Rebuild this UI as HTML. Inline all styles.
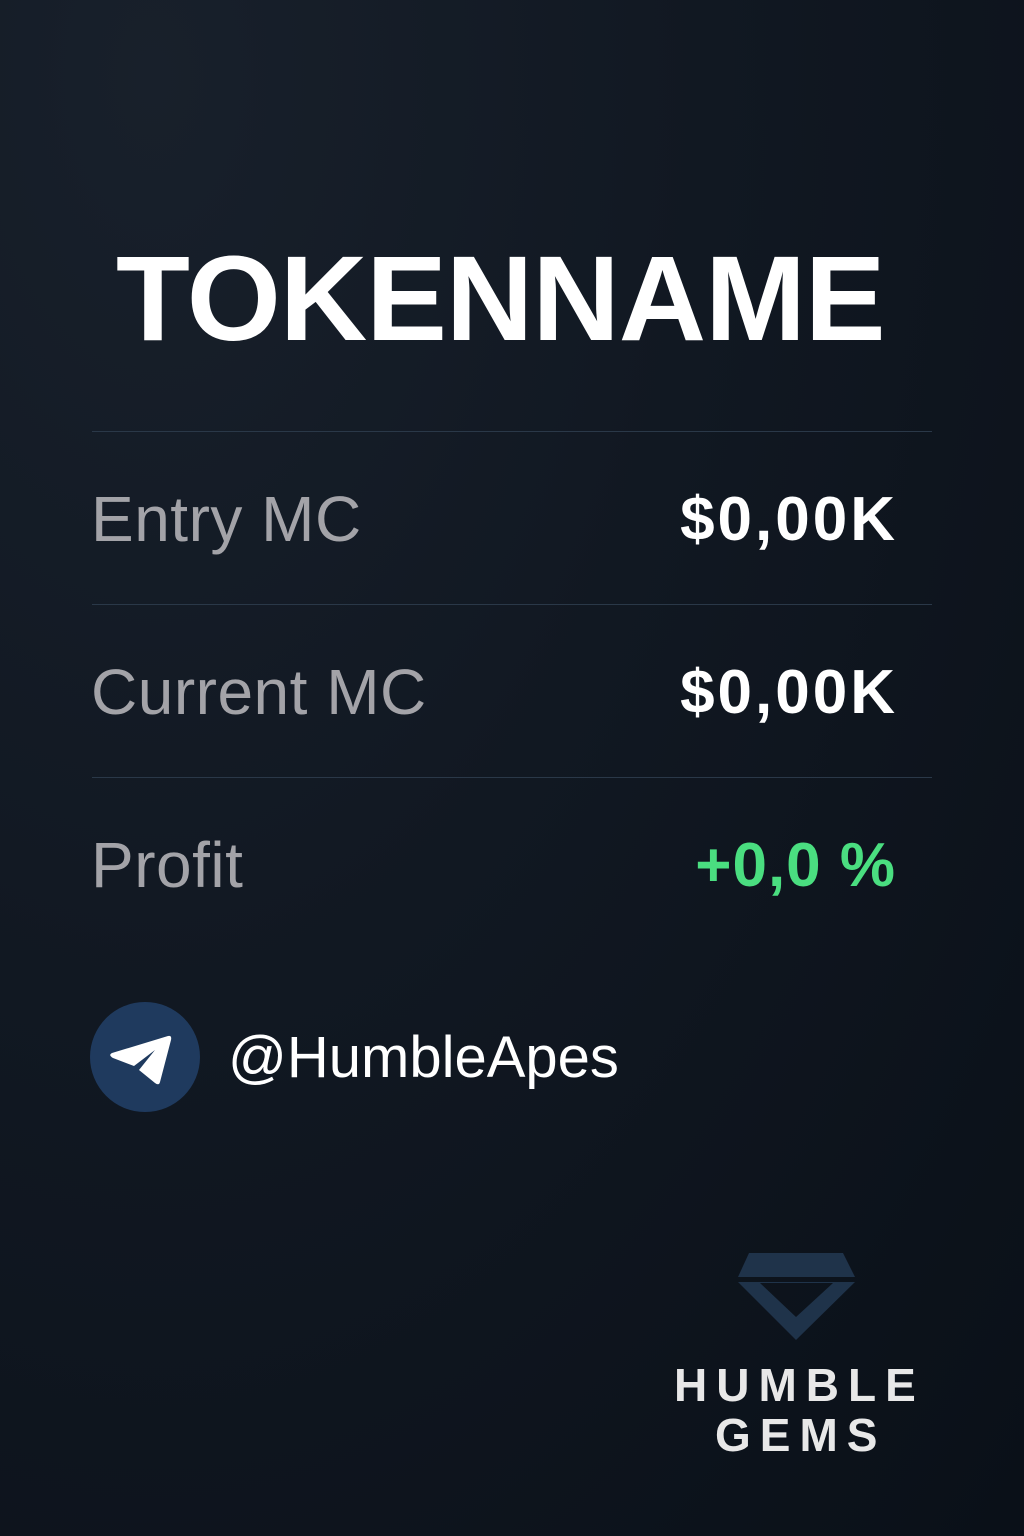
<!DOCTYPE html>
<html><head><meta charset="utf-8"><style>
html,body{margin:0;padding:0}
body{width:1024px;height:1536px;position:relative;overflow:hidden;font-family:"Liberation Sans","DejaVu Sans",sans-serif;
background:radial-gradient(ellipse at 15% 5%,#18202b 0%,#111822 45%,#0a1018 100%);}
.t{position:absolute;white-space:nowrap}
.line{position:absolute;left:92px;width:840px;height:1px;background:#2a3848}
.lab{color:#a3a3a8;font-size:64px;left:91px;letter-spacing:0.5px}
.val{color:#fff;font-size:62px;font-weight:bold;right:126px;letter-spacing:3px}
</style></head><body>
<div class="t" style="left:116px;top:228px;font-size:121px;font-weight:bold;color:#fff;letter-spacing:-1px">TOKENNAME</div>
<div class="line" style="top:431px"></div>
<div class="line" style="top:604px"></div>
<div class="line" style="top:777px"></div>
<div class="t lab" style="top:482px">Entry MC</div>
<div class="t val" style="top:484px">$0,00K</div>
<div class="t lab" style="top:655px">Current MC</div>
<div class="t val" style="top:657px">$0,00K</div>
<div class="t lab" style="top:828px">Profit</div>
<div class="t val" style="top:830px;color:#4ade80;right:128px;letter-spacing:1px">+0,0 %</div>
<svg style="position:absolute;left:0;top:0" width="1024" height="1536">
<circle cx="145" cy="1057" r="55" fill="#1f3a5e"/>
<path d="M112 1053 L168 1036 Q172 1035 171 1040 L160 1082 Q159 1086 155 1083 L139 1070 L155 1050 L134 1066 L113 1058 Q108 1055 112 1053Z" fill="#fff"/>
<path d="M749 1253 L843 1253 L855 1277 L738 1277Z" fill="#1f334a"/>
<path d="M738 1282 L855 1282 L796 1340Z M760 1283 L796 1317 L833 1283Z" fill="#1f334a" fill-rule="evenodd"/>
</svg>
<div class="t" style="left:228px;top:1024px;font-size:58px;color:#fff">@HumbleApes</div>
<div class="t" style="left:674px;top:1358px;font-size:46px;color:#e8e8e8;letter-spacing:9px;font-weight:bold">HUMBLE</div>
<div class="t" style="left:715px;top:1408px;font-size:46px;color:#e8e8e8;letter-spacing:9px;font-weight:bold">GEMS</div>
</body></html>
